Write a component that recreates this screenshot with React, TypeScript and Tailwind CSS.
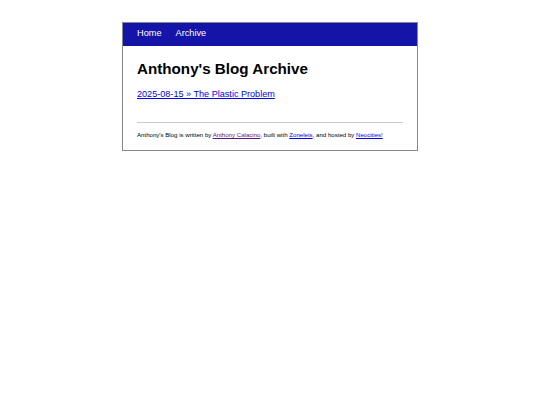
export default function App() {
  return (
    <div className="min-h-[405px] bg-white pt-[22px] font-['Liberation_Sans',Arial,sans-serif]">
      <div className="mx-auto w-[296px] border border-[#888]">
        <nav className="flex h-[23px] items-center gap-[14px] bg-[#1414a8] px-[14px] pb-[1px] text-[9.2px] text-white">
          <a href="#">Home</a>
          <a href="#">Archive</a>
        </nav>
        <main className="px-[14px] pb-[11px]">
          <h1 className="mt-[13px] text-[15.2px] font-bold leading-[20px] text-black">Anthony's Blog Archive</h1>
          <a href="#" className="mt-[9px] block text-[9.1px] leading-[13px] text-[#0000ee] underline">
            2025-08-15 » The Plastic Problem
          </a>
          <hr className="mt-[21px] border-[#ccc]" />
          <p className="mt-[7px] text-[6.1px] leading-[9px] text-black">
            Anthony's Blog is written by{' '}
            <a href="#" className="text-[#551a8b] underline">Anthony Calacino</a>, built with{' '}
            <a href="#" className="text-[#0000ee] underline">Zonelets</a>, and hosted by{' '}
            <a href="#" className="text-[#0000ee] underline">Neocities!</a>
          </p>
        </main>
      </div>
    </div>
  );
}
